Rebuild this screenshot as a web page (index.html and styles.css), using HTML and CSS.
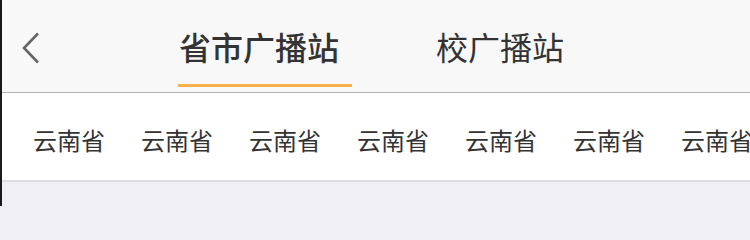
FILE: index.html
```html
<!DOCTYPE html>
<html lang="zh">
<head>
<meta charset="utf-8">
<link rel="stylesheet" href="styles.css">
</head>
<body>
<div class="page">
  <header class="topbar">
    <div class="back">
      <svg width="18" height="32" viewBox="0 0 18 32"><polyline points="16,1.5 2,16 16,30.5" fill="none" stroke="#666" stroke-width="2.6"/></svg>
    </div>
    <nav class="tabs">
      <div class="tab active"><span>省市广播站</span><i class="bar"></i></div>
      <div class="tab"><span>校广播站</span></div>
    </nav>
  </header>
  <div class="regions">
    <span>云南省</span><span>云南省</span><span>云南省</span><span>云南省</span><span>云南省</span><span>云南省</span><span>云南省</span>
  </div>
  <div class="rest"></div>
</div>
</body>
</html>
```
FILE: styles.css
```css
html, body { margin: 0; padding: 0; background: #efeff4; }
body {
  width: 750px; height: 206px; overflow: hidden;
  font-family: "Noto Sans CJK SC", "Noto Sans", sans-serif;
  color: #333;
}
.page {
  border-left: 2px solid #1a1a1a;
  height: 206px;
  display: flex; flex-direction: column;
  background: #efeff4;
}
.topbar {
  height: 92px;
  background: #f8f8f8;
  border-bottom: 1px solid #b3b3b3;
  display: flex;
  flex-shrink: 0;
}
.back {
  width: 60px;
  padding-left: 20px;
  box-sizing: border-box;
  display: flex; align-items: center;
  padding-top: 3px;
}
.back svg { display: block; }
.tabs {
  display: flex;
  margin-left: 116px;
  gap: 84px;
}
.tab {
  display: flex; flex-direction: column; align-items: flex-start;
  font-size: 32px;
  line-height: 1;
  padding-top: 27px;
  box-sizing: border-box;
  height: 92px;
}
.tab span { display: block; height: 38px; line-height: 38px; }
.tab.active span { font-weight: 500; margin-left: 1px; }
.tab .bar {
  display: block;
  width: 174px; height: 3px;
  background: #fbb04a;
  margin-top: 19px;
}
.regions {
  height: 89px;
  background: #fff;
  border-bottom: 2px solid #dedede;
  display: flex; align-items: center;
  gap: 36px;
  padding-left: 31px;
  padding-top: 5px;
  box-sizing: border-box;
  white-space: nowrap;
  overflow: hidden;
  font-size: 24px;
  flex-shrink: 0;
}
.regions span { flex-shrink: 0; }
.rest { flex: 1; background: #efeff4; }
```
